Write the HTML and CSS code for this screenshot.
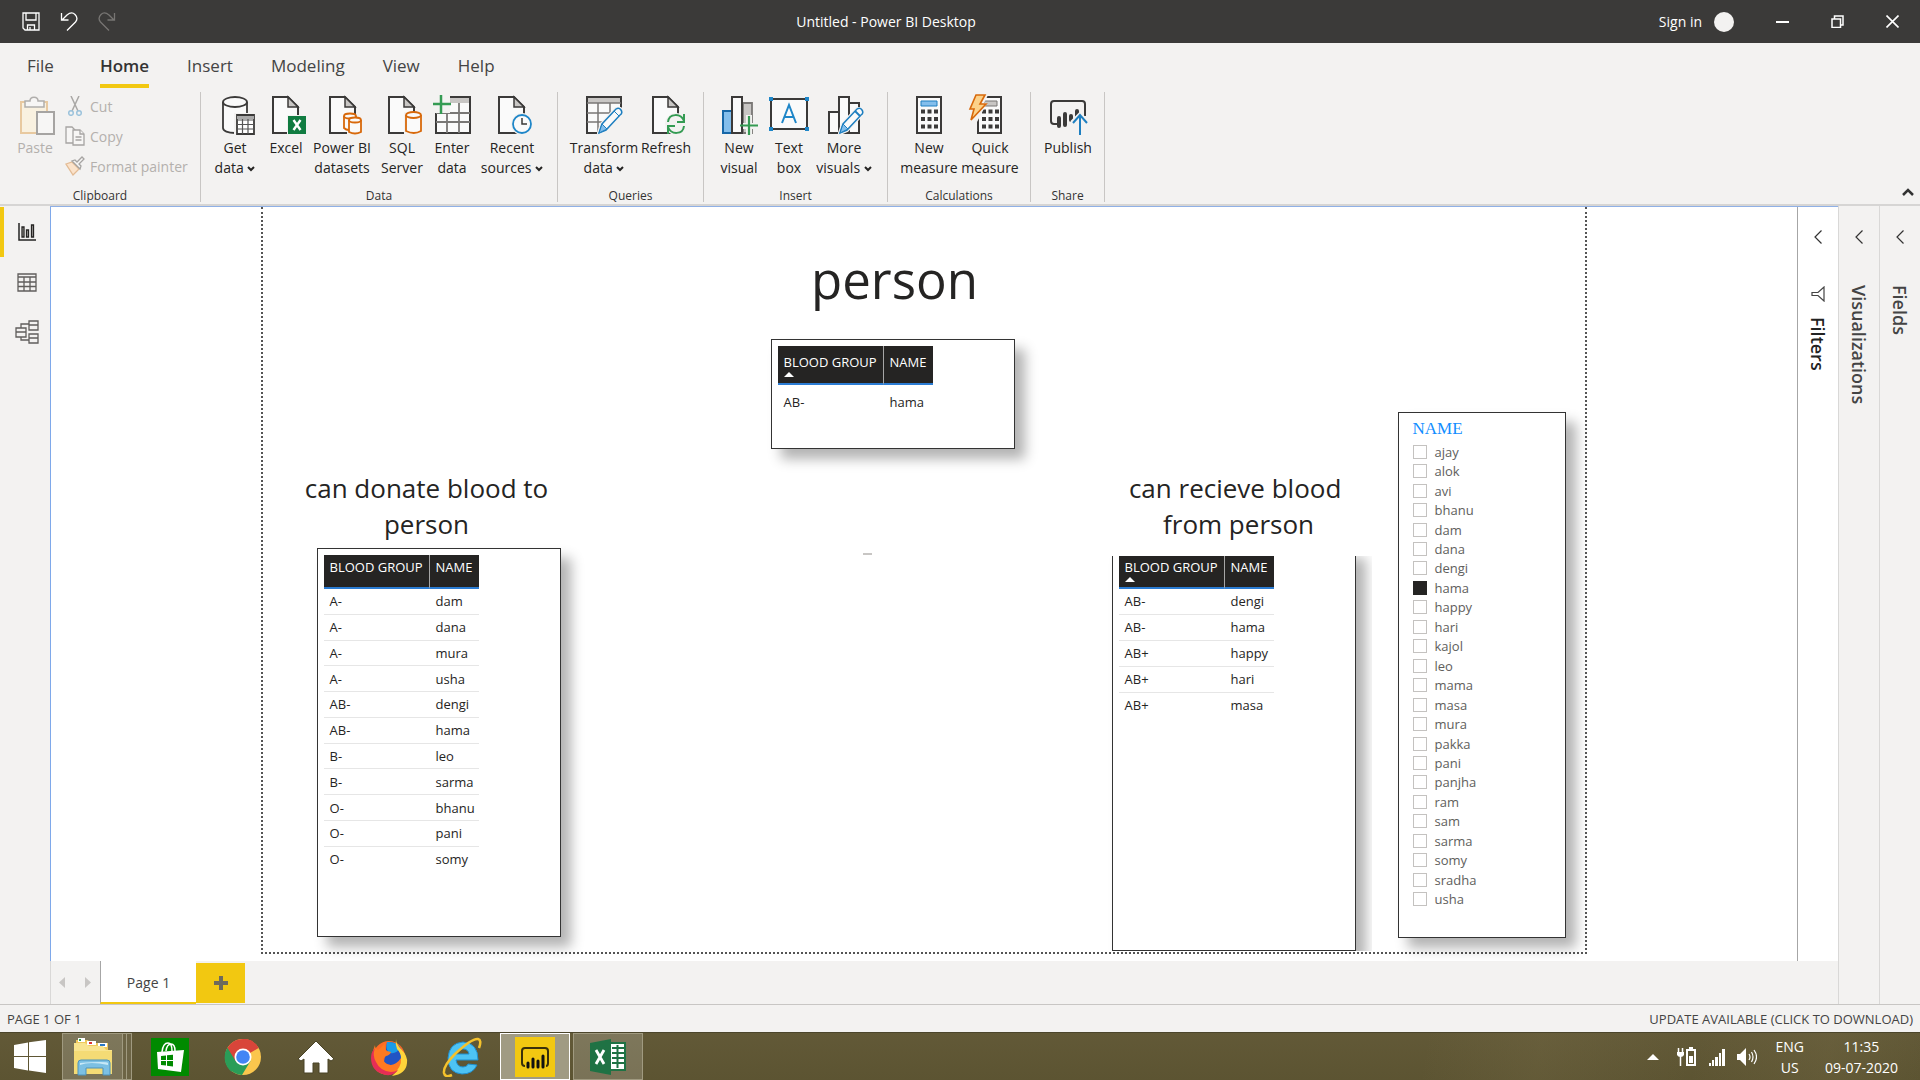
FILE: index.html
```html
<!DOCTYPE html>
<html lang="en">
<head>
<meta charset="utf-8">
<title>Untitled - Power BI Desktop</title>
<link rel="stylesheet" href="styles.css">
</head>
<body>
<svg class="defs" aria-hidden="true">
  <symbol id="doc" viewBox="0 0 40 40"><path d="M7 2h15l10 10v26H7z" fill="#fafafa" stroke="#3b3a39" stroke-width="2"/><path d="M22 2v10h10z" fill="#c8c6c4" stroke="#3b3a39" stroke-width="1.5"/></symbol>
  <symbol id="pencil" viewBox="0 0 26 28"><path d="M2 26l3-9L19 2q3-2 5 1t-1 5L9 23z" fill="#fafafa" stroke="#f3f2f1" stroke-width="4"/><path d="M2 26l3-9L19 2q3-2 5 1t-1 5L9 23z" fill="#fafafa" stroke="#1e7fc0" stroke-width="1.5"/><path d="M2 26l3-9 5 5z" fill="#83beec" stroke="#1e7fc0" stroke-width="1"/><path d="M17 4l5 5" stroke="#1e7fc0"/></symbol>
  <symbol id="chev" viewBox="0 0 8 6"><path d="M1 1l3 3 3-3" fill="none" stroke="#252423" stroke-width="2"/></symbol>
  <symbol id="back" viewBox="0 0 10 16"><path d="M8.500 1.500L2 8l6.500 6.500" fill="none" stroke="#333" stroke-width="1.200"/></symbol>
</svg>

<header class="titlebar">
  <div class="quick">
    <button aria-label="Save"><svg width="18" height="19" viewBox="0 0 18 19" fill="none" stroke="#fff" stroke-width="1.300"><path d="M1 1h16v17H3l-2-2zM4 1v7h10V1M5.500 18v-5h7v5M8 15v3"/></svg></button>
    <button aria-label="Undo"><svg width="18" height="20" viewBox="0 0 18 20" fill="none" stroke="#fff" stroke-width="1.300"><path d="M1.500 1v7h7M2 8l5-5c3-2.500 6-2.500 8-.5 2.500 2.500 2.500 5 .5 7.500L7 18.500"/></svg></button>
    <button aria-label="Redo" disabled><svg width="18" height="20" viewBox="0 0 18 20" fill="none" stroke="#777573" stroke-width="1.300"><path d="M16.500 1v7h-7M16 8l-5-5C8 .5 5 .5 3 2.500.5 5 .5 7.500 2.500 10l8.500 8.500"/></svg></button>
  </div>
  <h1>Untitled - Power BI Desktop</h1>
  <div class="window-tools">
    <button class="signin">Sign in <span class="avatar"></span></button>
    <button aria-label="Minimize"><svg width="13" height="13" viewBox="0 0 13 13"><path d="M0 7h13" stroke="#fff" stroke-width="2"/></svg></button>
    <button aria-label="Restore"><svg width="13" height="13" viewBox="0 0 13 13" fill="none" stroke="#fff" stroke-width="1.500"><path d="M1 4h8.500v8.500H1zM3.500 3.500V1h8.500v9h-2"/></svg></button>
    <button aria-label="Close"><svg width="13" height="13" viewBox="0 0 13 13"><path d="M.5.5l12 12M12.500.5l-12 12" stroke="#fff" stroke-width="1.600"/></svg></button>
  </div>
</header>

<nav class="tabs">
  <button class="file">File</button><button class="active">Home</button><button>Insert</button><button>Modeling</button><button>View</button><button>Help</button>
</nav>

<section class="ribbon">
  <div class="group clipboard">
    <div class="tools">
      <button class="tool" disabled><svg width="40" height="40" viewBox="0 0 40 40"><path d="M6 7h26v31H6z" fill="#f9f1e0" stroke="#e8c9a0" stroke-width="2"/><path d="M10 12V6h5c0-5 8-5 8 0h6v6z" fill="#f7f6f5" stroke="#b0aeac" stroke-width="1.500"/><path d="M22 17h17v22H22z" fill="#f7f6f5" stroke="#a6a4a2" stroke-width="2"/></svg>Paste</button>
      <div class="small-tools">
        <button disabled><svg width="20" height="20" viewBox="0 0 20 20" fill="none"><path d="M6 0l7 15M14 0L7 15" stroke="#a9a7a5" stroke-width="1.500"/><circle cx="6" cy="17" r="2.300" stroke="#9cc3dc" stroke-width="1.500"/><circle cx="14" cy="17" r="2.300" stroke="#9cc3dc" stroke-width="1.500"/></svg>Cut</button>
        <button disabled><svg width="20" height="20" viewBox="0 0 20 20" fill="#f7f6f5" stroke="#a6a4a2" stroke-width="1.300"><path d="M1 1h6l3 3v13H1z"/><path d="M8 4h7l4 4v11H8z"/><path d="M15 4v4h4M10.500 11h6M10.500 14h6"/></svg>Copy</button>
        <button disabled><svg width="20" height="20" viewBox="0 0 20 20"><path d="M1 8l6-2 7 7-6 6z" fill="#fbe3cb" stroke="#e3bb94" stroke-width="1.300"/><path d="M7 5l8 8 1-3-2-2 5-5-2-2-5 5-2-2z" fill="#f7f6f5" stroke="#a6a4a2" stroke-width="1.300"/></svg>Format painter</button>
      </div>
    </div>
    <h2>Clipboard</h2>
  </div>
  <div class="group data">
    <div class="tools">
      <button class="tool"><svg width="40" height="40" viewBox="0 0 40 40"><path d="M8 7v26c0 3 5 5 12 5l12-4V7" fill="#fafafa" stroke="#3b3a39" stroke-width="1.800"/><ellipse cx="20" cy="7" rx="12" ry="5" fill="#fafafa" stroke="#3b3a39" stroke-width="1.800"/><path d="M19 18h22v22H19z" fill="#f3f2f1"/><path d="M22 20h17v19H22z" fill="#fff" stroke="#3b3a39" stroke-width="1.800"/><path d="M22 21h17v3H22z" fill="#aaa"/><path d="M22 25h17M22 29.500h17M22 34h17M27.500 24v15M33 24v15" stroke="#555" stroke-width="1.200"/></svg><span>Get<br>data <svg class="chev"><use href="#chev"/></svg></span></button>
      <button class="tool"><svg width="40" height="40"><use href="#doc"/><path d="M21 20h19v20H21z" fill="#f3f2f1"/><path d="M22 21h18v18H22z" fill="#107c41"/><path d="M27.500 25l7 10M34.500 25l-7 10" stroke="#fff" stroke-width="2.400"/></svg>Excel</button>
      <button class="tool"><svg width="40" height="40" viewBox="-1 0 40 40"><use href="#doc" width="40" height="40"/><path d="M20 20q6-4 13 1l6 3v16H24V34h-4z" fill="#f3f2f1"/><g fill="#fafafa" stroke="#d8690b" stroke-width="1.800"><path d="M21 21v12q2 2 5 2h7V21"/><ellipse cx="27" cy="21" rx="6" ry="2.500"/><path d="M26 25v12q6 3 12 0V25"/><ellipse cx="32" cy="25" rx="6" ry="2.500"/></g></svg><span>Power BI<br>datasets</span></button>
      <button class="tool"><svg width="40" height="40"><use href="#doc"/><path d="M22 17h18v23H22z" fill="#f3f2f1"/><g fill="#fafafa" stroke="#d8690b" stroke-width="1.800"><path d="M24 20v16q8 4 15 0V20"/><ellipse cx="31.500" cy="20" rx="7.500" ry="3"/></g></svg><span>SQL<br>Server</span></button>
      <button class="tool"><svg width="40" height="40" viewBox="0 0 40 40"><path d="M4 2h34v36H4z" fill="#fafafa" stroke="#3b3a39" stroke-width="2"/><path d="M5 3h32v5H5z" fill="#c8c6c4"/><path d="M4 18h34M4 27h34M15 8v30M27 8v30" stroke="#797775" stroke-width="1.800"/><path d="M0 0h18v18H0z" fill="#f3f2f1"/><path d="M9 0v19M1 9h18" stroke="#349b53" stroke-width="2.500"/></svg><span>Enter<br>data</span></button>
      <button class="tool"><svg width="40" height="40"><use href="#doc"/><circle cx="30" cy="29" r="11" fill="#f3f2f1"/><circle cx="30" cy="29" r="9" fill="#fafafa" stroke="#1e86c8" stroke-width="1.800"/><path d="M30 23v6h5" fill="none" stroke="#3b3a39" stroke-width="1.500"/></svg><span>Recent<br>sources <svg class="chev"><use href="#chev"/></svg></span></button>
    </div>
    <h2>Data</h2>
  </div>
  <div class="group queries">
    <div class="tools">
      <button class="tool"><svg width="40" height="40" viewBox="0 0 40 40"><path d="M3 2h34v36H3z" fill="#fafafa" stroke="#3b3a39" stroke-width="2"/><path d="M4 3h32v5H4z" fill="#c8c6c4"/><path d="M3 8h34M3 18h34M3 27h34M14 8v30M26 8v30" stroke="#797775" stroke-width="1.500"/><path d="M16 39L39 15v25z" fill="#f3f2f1"/><use href="#pencil" x="13" y="12" width="26" height="28"/></svg><span>Transform<br>data <svg class="chev"><use href="#chev"/></svg></span></button>
      <button class="tool"><svg width="40" height="40"><use href="#doc"/><circle cx="30" cy="29" r="11" fill="#f3f2f1"/><path d="M22 27c1-9 13-9 16-1M38 19v8h-7M38 31c-1 9-13 9-16 1M22 39v-8h7" fill="none" stroke="#349b53" stroke-width="2"/></svg>Refresh</button>
    </div>
    <h2>Queries</h2>
  </div>
  <div class="group insert">
    <div class="tools">
      <button class="tool"><svg width="40" height="40" viewBox="0 0 40 40"><path d="M24 8h9v30h-9z" fill="#c8c6c4" stroke="#797775" stroke-width="1.800"/><path d="M4 16h9v22H4z" fill="#83beec" stroke="#1667a8" stroke-width="2"/><path d="M13 2h10v36H13z" fill="#fafafa" stroke="#3b3a39" stroke-width="2"/><path d="M27 20h6v8h7v6h-7v6h-6v-6h-3v-6h3z" fill="#f3f2f1"/><path d="M30 21v19M21 30.500h18" stroke="#349b53" stroke-width="2.200"/></svg><span>New<br>visual</span></button>
      <button class="tool"><svg width="40" height="40" viewBox="0 0 40 40"><path d="M2 4h36v30H2z" fill="#fafafa" stroke="#3b3a39" stroke-width="2"/><path d="M0 2h4v4H0zM36 2h4v4h-4zM0 32h4v4H0zM36 32h4v4h-4z" fill="#1e86c8"/><path d="M13 28l7-18 7 18M15.500 22h9" fill="none" stroke="#1e86c8" stroke-width="2"/></svg><span>Text<br>box</span></button>
      <button class="tool"><svg width="40" height="40" viewBox="0 0 40 40" fill="#fafafa" stroke="#3b3a39" stroke-width="2"><path d="M25 8h10v30H25zM5 17h10v21H5zM15 2h10v36H15z"/><use href="#pencil" x="14" y="12" width="26" height="28" stroke="none"/></svg><span>More<br>visuals <svg class="chev"><use href="#chev"/></svg></span></button>
    </div>
    <h2>Insert</h2>
  </div>
  <div class="group calc">
    <div class="tools">
      <button class="tool"><svg width="40" height="40" viewBox="0 0 40 40"><path d="M8 2h24v36H8z" fill="#fafafa" stroke="#3b3a39" stroke-width="2"/><path d="M12 6h16v5H12z" fill="#83beec" stroke="#1e7fc0"/><path d="M12 16.500h17M12 24h17M12 31.500h17" stroke="#3b3a39" stroke-width="4" stroke-dasharray="4 2.500"/></svg><span>New<br>measure</span></button>
      <button class="tool"><svg width="40" height="40" viewBox="0 0 40 40"><path d="M8 2h23v36H8z" fill="#fafafa" stroke="#3b3a39" stroke-width="2"/><path d="M14 6h13v5H14z" fill="#c8c6c4" stroke="#797775"/><path d="M12 16.500h17M12 24h17M12 31.500h17" stroke="#3b3a39" stroke-width="4" stroke-dasharray="4 2.500"/><path d="M5-2h14L14 8h3L7 27l-9 2z" fill="#f3f2f1"/><path d="M6 0h9l-5 9h6L1 25l3-11H0z" fill="#fcd28a" stroke="#d8690b" stroke-width="1.600"/></svg><span>Quick<br>measure</span></button>
    </div>
    <h2>Calculations</h2>
  </div>
  <div class="group share">
    <div class="tools">
      <button class="tool"><svg width="40" height="40" viewBox="0 0 40 40" fill="none"><path d="M10 29H6q-3 0-3-3V9q0-3 3-3h28q3 0 3 3v12" stroke="#3b3a39" stroke-width="2"/><path d="M11 23v8M17 19v11M23 21v4M29 16v7" stroke="#3b3a39" stroke-width="4" stroke-linecap="round"/><path d="M32 40V21M24 28l8-8 8 8" stroke="#f3f2f1" stroke-width="5"/><path d="M32 40V21M25 28l7-8 7 8" stroke="#1e7fc0" stroke-width="2"/></svg>Publish</button>
    </div>
    <h2>Share</h2>
  </div>
  <button class="collapse" aria-label="Collapse ribbon"><svg width="12" height="8" viewBox="0 0 12 8"><path d="M1 7l5-5 5 5" fill="none" stroke="#333" stroke-width="2.500"/></svg></button>
</section>

<main class="workspace">
  <nav class="rail">
    <button class="active" aria-label="Report"><svg width="18" height="18" viewBox="0 0 18 18"><path d="M1 0v17h17" fill="none" stroke="#252423" stroke-width="1.500"/><path d="M4 4h2v10H4zM8.500 7h2v7h-2zM13.500 2h2v12h-2z" fill="#b3b0ad" stroke="#252423" stroke-width="1.300"/></svg></button>
    <button aria-label="Data"><svg width="20" height="19" viewBox="0 0 20 19" fill="none" stroke="#605e5c" stroke-width="1.300"><path d="M1 1h18v17H1zM1 4h18M1 9h18M1 13.500h18M7 4v14M13 4v14"/></svg></button>
    <button aria-label="Model"><svg width="24" height="24" viewBox="0 0 24 24" fill="none" stroke="#605e5c" stroke-width="1.300"><path d="M1 8h10v9H1zM1 12h10M14 1h9v9h-9zM14 5h9M14 14h9v9h-9zM14 18h9M6 8V4h8M6 17v3h8"/></svg></button>
  </nav>

  <div class="center">
    <div class="view">
      <div class="canvas">
        <div class="page">
          <h2 class="text person">person</h2>
          <h3 class="text donate">can donate blood to person</h3>
          <h3 class="text receive">can recieve blood&nbsp; from person</h3>
          <span class="handle"></span>

          <div class="visual v-person">
            <table>
              <thead><tr><th class="sorted">BLOOD GROUP</th><th>NAME</th></tr></thead>
              <tbody><tr><td>AB-</td><td>hama</td></tr></tbody>
            </table>
          </div>

          <div class="visual v-donate">
            <table>
              <thead><tr><th>BLOOD GROUP</th><th>NAME</th></tr></thead>
              <tbody>
                <tr><td>A-</td><td>dam</td></tr>
                <tr><td>A-</td><td>dana</td></tr>
                <tr><td>A-</td><td>mura</td></tr>
                <tr><td>A-</td><td>usha</td></tr>
                <tr><td>AB-</td><td>dengi</td></tr>
                <tr><td>AB-</td><td>hama</td></tr>
                <tr><td>B-</td><td>leo</td></tr>
                <tr><td>B-</td><td>sarma</td></tr>
                <tr><td>O-</td><td>bhanu</td></tr>
                <tr><td>O-</td><td>pani</td></tr>
                <tr><td>O-</td><td>somy</td></tr>
              </tbody>
            </table>
          </div>

          <div class="clip">
            <div class="visual v-receive">
              <table>
                <thead><tr><th class="sorted">BLOOD GROUP</th><th>NAME</th></tr></thead>
                <tbody>
                  <tr><td>AB-</td><td>dengi</td></tr>
                  <tr><td>AB-</td><td>hama</td></tr>
                  <tr><td>AB+</td><td>happy</td></tr>
                  <tr><td>AB+</td><td>hari</td></tr>
                  <tr><td>AB+</td><td>masa</td></tr>
                </tbody>
              </table>
            </div>
          </div>

          <fieldset class="visual slicer">
            <legend>NAME</legend>
            <div class="options">
              <label><input type="checkbox">ajay</label>
              <label><input type="checkbox">alok</label>
              <label><input type="checkbox">avi</label>
              <label><input type="checkbox">bhanu</label>
              <label><input type="checkbox">dam</label>
              <label><input type="checkbox">dana</label>
              <label><input type="checkbox">dengi</label>
              <label><input type="checkbox" checked>hama</label>
              <label><input type="checkbox">happy</label>
              <label><input type="checkbox">hari</label>
              <label><input type="checkbox">kajol</label>
              <label><input type="checkbox">leo</label>
              <label><input type="checkbox">mama</label>
              <label><input type="checkbox">masa</label>
              <label><input type="checkbox">mura</label>
              <label><input type="checkbox">pakka</label>
              <label><input type="checkbox">pani</label>
              <label><input type="checkbox">panjha</label>
              <label><input type="checkbox">ram</label>
              <label><input type="checkbox">sam</label>
              <label><input type="checkbox">sarma</label>
              <label><input type="checkbox">somy</label>
              <label><input type="checkbox">sradha</label>
              <label><input type="checkbox">usha</label>
            </div>
          </fieldset>
        </div>
      </div>
      <aside class="pane filters">
        <button aria-label="Expand filters"><svg width="10" height="16"><use href="#back"/></svg></button>
        <svg class="funnel" width="14" height="16" viewBox="0 0 14 16" fill="none" stroke="#444" stroke-width="1.200"><path d="M13 1v14L7 9.500H1v-3h6z"/></svg>
        <h2>Filters</h2>
      </aside>
    </div>
    <div class="page-tabs">
      <button class="arrow" aria-label="Previous page"><svg width="6" height="11"><path d="M6 0v11L0 5.500z" fill="#c8c6c4"/></svg></button>
      <button class="arrow" aria-label="Next page"><svg width="6" height="11"><path d="M0 0v11l6-5.500z" fill="#c8c6c4"/></svg></button>
      <button class="page-tab">Page 1</button>
      <button class="add" aria-label="New page"><svg width="14" height="14"><path d="M7 0v14M0 7h14" stroke="#6e6a5c" stroke-width="4"/></svg></button>
    </div>
  </div>

  <aside class="pane">
    <button aria-label="Expand visualizations"><svg width="10" height="16"><use href="#back"/></svg></button>
    <h2>Visualizations</h2>
  </aside>
  <aside class="pane">
    <button aria-label="Expand fields"><svg width="10" height="16"><use href="#back"/></svg></button>
    <h2>Fields</h2>
  </aside>
</main>

<footer class="status"><span>PAGE 1 OF 1</span><a href="#">UPDATE AVAILABLE (CLICK TO DOWNLOAD)</a></footer>

<div class="taskbar">
  <button class="start" aria-label="Start"><svg width="32" height="33" viewBox="0 0 32 33" fill="#fff"><path d="M0 5l14-2.500V16H0zM15 2.300L32 0v16H15zM0 17h14v13.500L0 28zM15 17h17v16l-17-2.500z"/></svg></button>
  <button class="app running stacked" aria-label="File Explorer"><svg width="40" height="40" viewBox="0 0 40 40"><path d="M3 3h12l2 3h18v8H3z" fill="#efc95c"/><path d="M5 1h7v4H5z" fill="#fff"/><path d="M6 2h2v2H6z" fill="#2aa04a"/><path d="M14 4h9v4h-9z" fill="#fff"/><path d="M16 5h3v2h-3z" fill="#d33"/><path d="M25 6h9v4h-9z" fill="#fff"/><path d="M27 7h5v2h-5z" fill="#2878c8"/><path d="M1 6h11l4 3h14l3 4h6v24H1z" fill="#f8e48f"/><path d="M1 14h38v23H1z" fill="#f4db75"/><path d="M5 38V26q0-3 3-3h26q3 0 3 3v12h-7v-7H13v7z" fill="#7cc0e3" stroke="#4c93bb"/><path d="M7 28q10-4 28 0v-2q-2-2-28 0z" fill="#c9e9f7"/></svg></button>
  <button class="app" aria-label="Store"><svg width="38" height="38" viewBox="0 0 38 38"><path d="M0 0h38v38H0z" fill="#008a00"/><path d="M6 14l27-2-3 22-23-3z" fill="#fff"/><path d="M11 14q1-9 6-9 4 0 4 8M15 13q1-7 5-7 4 0 4 7" fill="none" stroke="#fff" stroke-width="1.500"/><path d="M10 18l5-.5V22h-5zM16 17.300l6-.6V22h-6zM10 23h5v4.500L10 27zM16 23h6v5.500l-6-.7z" fill="#008a00"/></svg></button>
  <button class="app" aria-label="Chrome"><svg width="38" height="38" viewBox="0 0 38 38"><circle cx="19" cy="19" r="18" fill="#fbc64d"/><path d="M19 19L3.400 10A18 18 0 0 1 34.600 10z" fill="#d9453a"/><path d="M19 1a18 18 0 0 1 15.600 9H19z" fill="#d9453a"/><path d="M3.400 10A18 18 0 0 0 18 37l8.500-14L19 19z" fill="#2a9d58"/><path d="M3.400 10L12 24l7-14z" fill="#d9453a"/><path d="M3.400 10L12 24l-4 10A18 18 0 0 1 3.400 10z" fill="#2a9d58"/><circle cx="19" cy="19" r="8.500" fill="#fff"/><circle cx="19" cy="19" r="6.800" fill="#4385f5"/></svg></button>
  <button class="app" aria-label="Home"><svg width="38" height="34" viewBox="0 0 38 34"><path d="M19 1l18 18-3 2-3-2v14h-9V23h-6v10H7V19l-3 2-3-2z" fill="#fff" stroke="#494326"/></svg></button>
  <button class="app" aria-label="Firefox"><svg width="38" height="38" viewBox="0 0 38 38"><circle cx="19" cy="19" r="16" fill="#ff6a25"/><path d="M17 4q10-1 14 7 4 9-2 14-9 5-15-1z" fill="#2254c4"/><path d="M17 4q9-1 13 6-3 6-10 5-5-2-3-11z" fill="#1b9be8"/><path d="M5 7q0 4 3 5 4-3 7-7-1 5 2 8l4 1q-1 3-5 4l-3 3q2 6 8 6 6-1 10-7 2 8-5 14-10 6-19-1Q-2 23 5 7z" fill="#ff7a22"/><path d="M26 1q0 5 5 10 7 7 6 14-1 11-15 13 10-9 9-18 0-5-4-9-2-5-1-10z" fill="#ffd43a"/><path d="M5 10q-3 7 1 14 4 9 15 10 4 0 7-2-4 6-12 5Q1 34 1 20q0-6 4-10z" fill="#e62e55"/></svg></button>
  <button class="app" aria-label="Internet Explorer"><svg width="40" height="40" viewBox="0 0 40 40" fill="none"><path d="M35 28q-4 9-15 9Q6 36 6 21 7 6 21 5q15 1 15 18H14q1 7 7 7 4 0 5-3zM14 17h13q-1-5-6-5-6 0-7 5z" fill="#4dc3f4" fill-rule="evenodd" stroke="#1f8fd0"/><path d="M10 38Q3 41 2 36q-1-7 11-19Q30 1 36 2q4 1 1 9" stroke="#f5c22c" stroke-width="2.500"/></svg></button>
  <button class="app running current" aria-label="Power BI Desktop"><svg width="40" height="40" viewBox="0 0 40 40"><path d="M0 0h40v40H0z" fill="#f2c811"/><path d="M10 29q-3 0-3-3V14q0-3 3-3h20q3 0 3 3v12q0 3-2 3" fill="none" stroke="#3a300a" stroke-width="2"/><path d="M13 26v4M18 22v8M23 24v6M28 19v11" stroke="#111" stroke-width="3" stroke-linecap="round"/></svg></button>
  <button class="app running" aria-label="Excel"><svg width="38" height="36" viewBox="0 0 38 36"><path d="M20 4h16v27H20z" fill="#fff" stroke="#1f7244" stroke-width="2"/><path d="M23 9h12M23 14h12M23 19h12M23 24h12M28.500 6v23" stroke="#1f7244" stroke-width="2"/><path d="M1 4l21-4v36L1 32z" fill="#1f7244"/><path d="M7 11l8 14M15 11L7 25" stroke="#fff" stroke-width="2.800"/></svg></button>
  <div class="tray">
    <svg width="12" height="7"><path d="M0 7l6-6 6 6z" fill="#fff"/></svg>
    <svg width="20" height="20" viewBox="0 0 20 20" fill="none" stroke="#fff"><path d="M1.500 1v4M5.500 1v4M3.500 9v10" stroke-width="1.500"/><path d="M0 5h7v3q-1 2-3.500 2T0 8z" fill="#fff" stroke="none"/><path d="M10 3h8v15h-8zM12 1h4" stroke-width="2"/><path d="M12 9h4v7h-4z" fill="#fff" stroke="none"/></svg>
    <svg width="16" height="18" fill="#fff"><path d="M0 15h2v3H0zM3 12h2v6H3zM6 9h3v9H6zM10 5h2v13h-2zM13 1h3v17h-3z"/></svg>
    <svg width="20" height="18" viewBox="0 0 20 18"><path d="M0 6h3l6-6v18l-6-6H0z" fill="#fff"/><path d="M12 6q2 3 0 6M14.500 4q3 5 0 10M17 2q5 7 0 14" fill="none" stroke="#fff" stroke-width="1.200"/></svg>
    <span class="lang">ENG<br>US</span>
    <time>11:35<br>09-07-2020</time>
  </div>
</div>
</body>
</html>
```
FILE: styles.css
```css
* { box-sizing: border-box; }

body {
  margin: 0;
  height: 100vh;
  display: flex;
  flex-direction: column;
  overflow: hidden;
  background: #f3f2f1;
  color: #252423;
  font-family: "Open Sans", "Noto Sans", sans-serif;
  font-size: 14px;
}

.defs { display: none; }

h1, h2, h3 { margin: 0; font-size: inherit; font-weight: 400; }

button {
  margin: 0;
  padding: 0;
  border: 0;
  background: none;
  color: inherit;
  font: inherit;
}

svg { display: block; }

/* Title bar */
.titlebar {
  flex: none;
  height: 43px;
  display: flex;
  align-items: center;
  background: #3b3a39;
  color: #fff;
}
.quick { width: 116px; padding-left: 22px; display: flex; gap: 20px; }
.titlebar h1 { flex: 1; text-align: center; }
.window-tools {
  width: 264px;
  display: flex;
  align-items: center;
  justify-content: flex-end;
  gap: 42px;
  padding-right: 21px;
}
.signin { display: flex; align-items: center; gap: 12px; white-space: nowrap; }
.avatar { width: 20px; height: 20px; border-radius: 50%; background: #f3f2f1; }

/* Ribbon tabs */
.tabs {
  flex: none;
  height: 49px;
  display: flex;
  gap: 38px;
  padding: 4px 27px 4px;
  font-size: 17px;
  color: #444;
}
.tabs button { border-bottom: 4px solid transparent; line-height: 38px; }
.tabs .file { margin-right: 8px; }
.tabs .active { font-weight: 600; color: #333; border-color: #f2c811; }

/* Ribbon */
.ribbon {
  flex: none;
  display: flex;
  height: 112px;
  padding-bottom: 2px;
}
.group {
  display: flex;
  flex-direction: column;
  justify-content: space-between;
  border-right: 1px solid #c8c6c4;
}
.group h2 { font-size: 12px; line-height: 12px; text-align: center; color: #333; }
.tools { display: grid; padding-top: 3px; }
.tool {
  display: flex;
  flex-direction: column;
  align-items: center;
  gap: 3px;
  line-height: 20px;
  white-space: nowrap;
}
.tool > svg { overflow: visible; }
.tool:disabled, .small-tools button { color: #b3b0ad; }
.chev { display: inline-block; width: 8px; height: 6px; vertical-align: 1px; }
.clipboard { width: 201px; }
.clipboard .tools { grid-template-columns: 46px auto; padding-left: 12px; column-gap: 7px; }
.small-tools { display: grid; grid-auto-rows: 30px; }
.small-tools button { display: flex; align-items: center; gap: 5px; padding-bottom: 8px; white-space: nowrap; }
.data .tools { grid-template-columns: 58px 44px 68px 52px 48px 72px; padding-left: 5px; padding-right: 9px; }
.queries .tools { grid-template-columns: 72px 52px; padding-left: 10px; padding-right: 11px; }
.insert .tools { grid-template-columns: 50px 50px 60px; padding-left: 10px; padding-right: 13px; }
.calc .tools { grid-template-columns: 60px 62px; padding-left: 11px; padding-right: 9px; }
.share .tools { grid-template-columns: 60px; padding-left: 7px; padding-right: 6px; }
.collapse { margin-left: auto; align-self: flex-end; padding: 0 6px 6px 0; }

/* Workspace */
.workspace {
  flex: 1;
  min-height: 0;
  display: flex;
  border-top: 2px solid #d6d5d4;
}
.rail {
  flex: none;
  width: 50px;
  padding-top: 1px;
}
.rail button {
  display: flex;
  align-items: center;
  justify-content: center;
  width: 50px;
  height: 50px;
  border-left: 4px solid transparent;
}
.rail .active { border-color: #f2c811; }
.center { flex: 1; min-width: 0; display: flex; flex-direction: column; }
.view { flex: 1; min-height: 0; display: flex; border-top: 1px solid #8fb0e6; }
.canvas {
  flex: 1;
  display: flex;
  justify-content: center;
  padding-bottom: 7px;
  border-left: 1px solid #7ea8ea;
  background: #fff;
}
.page {
  position: relative;
  width: 76%;
  border: 2px dotted #555;
  border-top: 0;
}

/* Items placed on the report canvas */
.text, .visual, .handle, .clip { position: absolute; }
.text { text-align: center; line-height: 36px; font-size: 26px; }
.text.person { left: 530px; top: 40px; width: 204px; font-size: 51px; line-height: 64px; }
.donate { left: 32px; top: 263px; width: 264px; }
.receive { left: 854px; top: 263px; width: 244px; }
.handle { left: 600px; top: 346px; width: 9px; height: 2px; background: #c8c6c4; }

.visual {
  margin: 0;
  padding: 6px;
  border: 1px solid #333;
  background: #fff;
  box-shadow: 10px 10px 12px rgba(0, 0, 0, .3);
}
.v-person { left: 508px; top: 132px; width: 244px; height: 110px; }
.v-donate { left: 54px; top: 341px; width: 244px; height: 389px; }
.clip { left: 839px; top: 349px; width: 270px; height: 395px; overflow: hidden; }
.v-receive { left: 10px; top: -8px; width: 244px; height: 403px; }

.visual table {
  width: 155px;
  table-layout: fixed;
  border-collapse: separate;
  border-spacing: 0;
  font-size: 13px;
  line-height: 16px;
}
.v-person table { height: 73px; }
.v-donate table { height: 316px; }
.v-receive table { height: 162px; }
.visual th {
  height: 34px;
  padding: 4px 0 0 6px;
  vertical-align: top;
  text-align: left;
  font-weight: 400;
  white-space: nowrap;
  color: #fff;
  background: #252423;
  border-bottom: 2px solid #2b7cd3;
}
.v-person th { height: 39px; padding-top: 8px; }
.visual th:first-child { width: 106px; border-right: 1px solid #a6a6a6; }
.sorted::after {
  content: "";
  display: block;
  width: 0;
  margin-top: 2px;
  border: 5px solid transparent;
  border-top: 0;
  border-bottom-color: #fff;
}
.visual td { padding: 0 0 0 6px; border-bottom: 1px solid #e6e6e6; }
.visual tr:last-child td { border-bottom: 0; }

.slicer {
  left: 1135px;
  top: 205px;
  width: 168px;
  height: 526px;
  padding: 6px 14px;
  display: flex;
  flex-direction: column;
  color: #605e5c;
  font-size: 13px;
}
.slicer legend {
  float: left;
  padding: 0;
  line-height: 20px;
  color: #118dff;
  font-family: "Liberation Serif", serif;
  font-size: 17px;
}
.options { display: flex; flex-direction: column; height: 470px; padding-top: 3px; }
.options label { flex: 1; display: flex; align-items: center; gap: 8px; line-height: 18px; }
.options input {
  appearance: none;
  margin: 0;
  width: 14px;
  height: 14px;
  border: 1px solid #c4c2c0;
  background: #fff;
}
.options input:checked { background: #252423; border-color: #252423; }

/* Collapsed side panes */
.pane {
  flex: none;
  width: 41px;
  display: flex;
  flex-direction: column;
  align-items: center;
  padding-top: 23px;
  border-left: 1px solid #d9d8d7;
}
.pane h2 {
  margin-top: 40px;
  writing-mode: vertical-rl;
  font-size: 18px;
  font-weight: 600;
  line-height: 24px;
  color: #444;
}
.filters { padding-top: 22px; background: #fff; border-left-color: #a6a6a6; }
.funnel { margin-top: 41px; }
.filters h2 { margin-top: 15px; color: #222; }

/* Page tabs */
.page-tabs {
  flex: none;
  height: 43px;
  display: flex;
  align-items: center;
  border-left: 1px solid #d9d8d7;
}
.arrow { width: 25px; padding-right: 3px; display: flex; justify-content: center; }
.arrow + .arrow { width: 24px; padding-right: 0; }
.page-tab {
  width: 96px;
  align-self: stretch;
  padding-top: 2px;
  background: #fff;
  border-left: 1px solid #a6a6a6;
  border-bottom: 2px solid #f2c811;
  color: #444;
}
.add {
  width: 49px;
  height: 40px;
  display: flex;
  align-items: center;
  justify-content: center;
  background: #f2c811;
}

/* Status bar */
.status {
  flex: none;
  height: 28px;
  display: flex;
  align-items: center;
  justify-content: space-between;
  padding: 0 7px;
  border-top: 1px solid #c8c6c4;
  font-size: 13px;
  color: #444;
}
.status a { color: inherit; text-decoration: none; }

/* Taskbar */
.taskbar {
  flex: none;
  height: 48px;
  display: flex;
  align-items: center;
  gap: 3px;
  background:
    linear-gradient(100deg, transparent 74%, rgba(150, 135, 95, .12) 80%, transparent 88%, rgba(150, 135, 95, .12) 95%, transparent),
    linear-gradient(#625937, #5c5432);
  border-top: 1px solid #4b452b;
}
.taskbar button { flex: none; height: 47px; display: flex; align-items: center; justify-content: center; }
.start { width: 59px; }
.app { width: 70px; }
.running { border: 1px solid #a09a80; background: rgba(255, 255, 255, .18); }
.stacked { padding-right: 8px; box-shadow: inset -4px 0 #6c6445, inset -5px 0 #a09a80, inset -8px 0 #6c6445, inset -9px 0 #a09a80; }
.current { border-color: #fff; background: #a09b83; }
.tray {
  margin-left: auto;
  padding-right: 22px;
  display: flex;
  align-items: center;
  gap: 12px;
  color: #fff;
  text-align: center;
  line-height: 21px;
}
.tray svg:first-child { margin-right: 6px; }
.lang { padding: 0 9px 0 6px; }
```
